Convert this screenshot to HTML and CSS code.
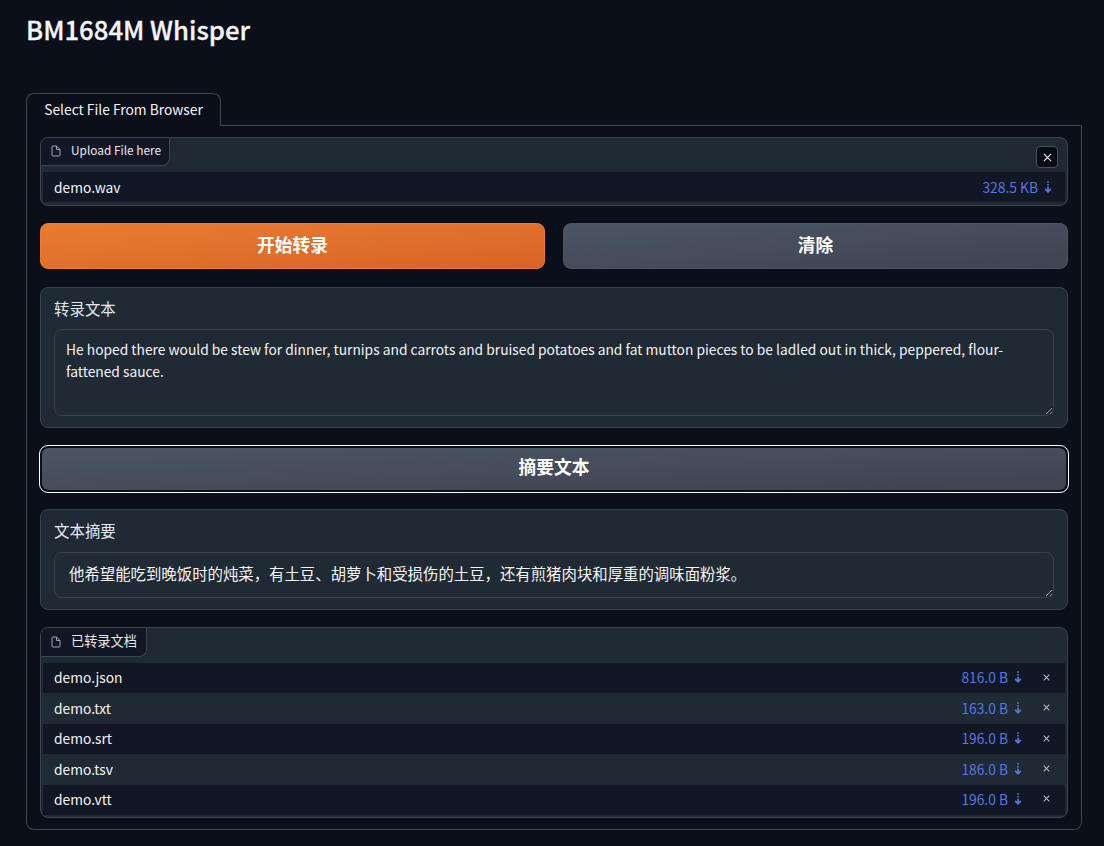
FILE: index.html
```html
<!DOCTYPE html>
<html lang="zh-CN">
<head>
<meta charset="utf-8">
<title>BM1684M Whisper</title>
<link rel="stylesheet" href="styles.css">
</head>
<body>
<svg class="defs" width="0" height="0">
  <symbol id="file" viewBox="0 0 24 24"><path d="M13 2H6a2 2 0 0 0-2 2v16a2 2 0 0 0 2 2h12a2 2 0 0 0 2-2V9z"/><path d="M13 2v7h7"/></symbol>
  <symbol id="down" viewBox="0 0 8 12"><path d="M4 .3v1.5M4 3v1.5M4 5.7v5M1.2 7.9L4 10.8l2.8-2.9"/></symbol>
  <symbol id="cross" viewBox="0 0 10 10"><path d="M1 1l8 8M9 1L1 9"/></symbol>
</svg>
<main class="app">
  <h1 class="title">BM1684M Whisper</h1>
  <div class="tabs"><button class="tab">Select File From Browser</button><div class="tab-line"></div></div>
  <section class="panel">
    <div class="block upload">
      <div class="head"><div class="label"><svg class="file-icon"><use href="#file"/></svg><span>Upload File here</span></div>
        <button class="clear" aria-label="Clear"><svg><use href="#cross"/></svg></button></div>
      <div class="row"><span class="name">demo.wav</span><a class="size">328.5 KB<svg><use href="#down"/></svg></a></div>
    </div>
    <div class="actions"><button class="btn primary">开始转录</button><button class="btn">清除</button></div>
    <div class="block field transcript">
      <label class="field-label">转录文本</label>
      <textarea class="input" readonly>He hoped there would be stew for dinner, turnips and carrots and bruised potatoes and fat mutton pieces to be ladled out in thick, peppered, flour-fattened sauce.</textarea>
    </div>
    <button class="btn focused">摘要文本</button>
    <div class="block field summary">
      <label class="field-label">文本摘要</label>
      <textarea class="input" readonly>他希望能吃到晚饭时的炖菜，有土豆、胡萝卜和受损伤的土豆，还有煎猪肉块和厚重的调味面粉浆。</textarea>
    </div>
    <div class="block files">
      <div class="head"><div class="label zh"><svg class="file-icon"><use href="#file"/></svg><span>已转录文档</span></div></div>
      <div class="row"><span class="name">demo.json</span><a class="size">816.0 B<svg><use href="#down"/></svg></a><svg class="remove"><use href="#cross"/></svg></div>
      <div class="row"><span class="name">demo.txt</span><a class="size">163.0 B<svg><use href="#down"/></svg></a><svg class="remove"><use href="#cross"/></svg></div>
      <div class="row"><span class="name">demo.srt</span><a class="size">196.0 B<svg><use href="#down"/></svg></a><svg class="remove"><use href="#cross"/></svg></div>
      <div class="row"><span class="name">demo.tsv</span><a class="size">186.0 B<svg><use href="#down"/></svg></a><svg class="remove"><use href="#cross"/></svg></div>
      <div class="row"><span class="name">demo.vtt</span><a class="size">196.0 B<svg><use href="#down"/></svg></a><svg class="remove"><use href="#cross"/></svg></div>
    </div>
  </section>
</main>
</body>
</html>
```
FILE: styles.css
```css
* { box-sizing: border-box; }
body { margin: 0; height: 846px; overflow: hidden; background: #0b0f19; color: #f3f4f6; font-family: "Noto Sans CJK SC", sans-serif; font-size: 13.8px; }
button, textarea { font-family: inherit; color: inherit; margin: 0; }
svg { fill: none; stroke: currentColor; flex: none; }
.defs { position: absolute; }
.app { padding: 0 22px 0 26px; display: flex; flex-direction: column; }
.title { margin: 9px 0 44px; font-size: 25.7px; line-height: 40px; font-weight: 500; -webkit-text-stroke: .3px currentColor; }
.tabs { display: flex; height: 33px; }
.tab { width: 195px; height: 33px; padding: 0 0 3px; border: 1px solid #3f444e; border-bottom: 0; border-radius: 8px 8px 0 0; background: none; font-size: 13.8px; }
.tab-line { flex: 1; border-bottom: 1px solid #3f444e; }
.panel { height: 704px; padding: 11px 13px; border: 1px solid #3f444e; border-top: 0; border-radius: 0 0 8px 8px; display: flex; flex-direction: column; gap: 17px; }
.block { border: 1px solid #374151; border-radius: 8px; background: #202a35; overflow: hidden; }
.upload { height: 69px; padding: 0 2px; border-color: #3b424e; }
.files { height: 191px; padding: 0 2px; border-color: #3b424e; }
.head { display: flex; justify-content: space-between; height: 34px; margin: 0 -2px; }
.files .head { height: 35px; }
.label { display: flex; align-items: center; width: 129px; height: 28px; padding: 0 0 2px 9px; border: solid #3f4652; border-width: 0 1px 1px 0; border-radius: 0 0 8px 0; background: #121725; color: #e5e7eb; font-size: 11.85px; white-space: nowrap; }
.label span { padding-bottom: 2.5px; }
.label.zh { width: 106px; height: 29px; font-size: 13.2px; padding-bottom: 1px; }
.file-icon { width: 12px; height: 12px; margin-right: 9px; stroke-width: 2; color: #9ca3af; }
.clear { display: grid; place-items: center; width: 22px; height: 22px; margin: 8px 9px 0 0; padding: 0; border: 1px solid #4a505c; border-radius: 4px; background: #080c15; }
.clear svg { width: 9px; height: 9px; stroke-width: 1.2; }
.row { display: flex; align-items: center; height: 30.4px; padding: 0 11px; background: #121725; line-height: 20px; }
.files .row { padding-bottom: 1.6px; }
.row:nth-child(odd) { background: #202a35; }
.name { flex: 1; }
.size { display: flex; align-items: center; color: #5478e4; }
.size svg { width: 8px; height: 12px; margin-left: 5.5px; margin-right: .5px; stroke-width: 1.7; }
.upload .size { margin-right: 2px; }
.remove { width: 7px; height: 7px; margin: 0 4px 0 21px; color: #b4b8c0; stroke-width: 1.5; }
.actions { display: grid; grid-template-columns: 1fr 1fr; gap: 18px; margin-bottom: 1px; }
.btn { height: 46px; padding: 0 0 5px; border: 1px solid #4b5563; border-radius: 8px; background: linear-gradient(to bottom right, #4b5563, #3f4352); font-size: 17.7px; font-weight: 700; color: #fff; }
.primary { border-color: #e87b33; background: linear-gradient(to bottom right, #e97c30, #d86328); }
.focused { margin: 1px 0 0; border: 2px solid #0b0f19; background-clip: padding-box; outline: 1px solid #fff; flex: none; padding-bottom: 6px; }
.field { display: flex; flex-direction: column; padding: 9px 13px 11px; }
.transcript { height: 141px; }
.summary { height: 101px; }
.field-label { height: 32px; font-size: 15.45px; line-height: 23px; color: #e5e7eb; }
.summary .field-label { height: 33px; }
.input { display: block; width: 100%; flex: 1; min-height: 0; padding: 8px 11px; border: 1px solid #374151; border-radius: 8px; outline: 0; background: #202a35; font-size: 13.8px; line-height: 22px; resize: vertical; overflow: hidden; }
.summary .input { padding: 9px 14px; font-size: 15.4px; line-height: 23px; }
```
